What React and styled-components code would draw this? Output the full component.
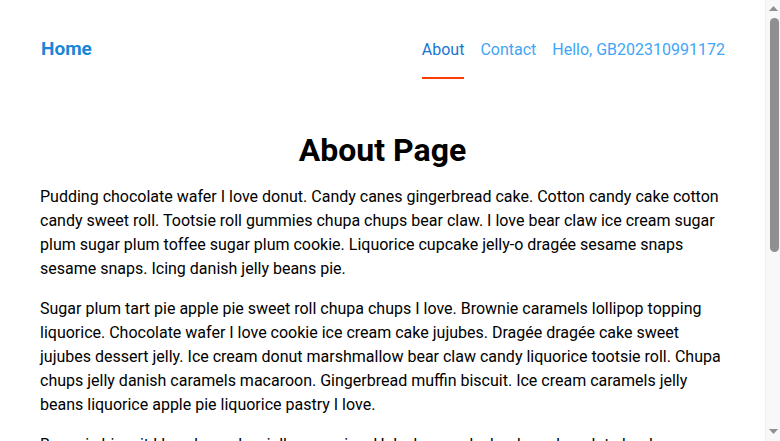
import { createGlobalStyle, styled } from "styled-components";

const GlobalStyle = createGlobalStyle`
  body {
    margin: 0;
    font-family: Roboto, "Liberation Sans", sans-serif;
    color: #000;
    background: #fff;
  }
`;

const Window = styled.div`
  display: flex;
  height: 100vh;
  overflow: hidden;
`;

const Container = styled.div`
  flex: 1;
  min-width: 0;
  padding: 0 40px;
  overflow: hidden;
`;

const ScrollBar = styled.div`
  width: 15px;
  flex-shrink: 0;
  display: flex;
  flex-direction: column;
  align-items: center;
  background: #f8f8f8;
  border-left: 1px solid #f0f0f0;
  box-sizing: border-box;
`;

const Arrow = styled.svg`
  width: 9px;
  height: 5px;
  margin: ${(props) => (props.down ? "12px 0 7px" : "6px 0 7px")};
  fill: #8f8f8f;
`;

const Track = styled.div`
  flex: 1;
  width: 100%;
  display: flex;
  justify-content: center;
`;

const Thumb = styled.div`
  width: 9px;
  height: 234px;
  background: #8f8f8f;
  border-radius: 5px;
  margin-left: 2px;
`;

const Navbar = styled.nav`
  display: flex;
  align-items: baseline;
  justify-content: space-between;
  padding-top: 24px;
`;

const Brand = styled.a`
  font-size: 19px;
  font-weight: 700;
  color: #1a86d8;
  text-decoration: none;
  padding-left: 1px;
`;

const NavLinks = styled.div`
  display: flex;
  align-items: baseline;
  gap: 16px;
`;

const NavLink = styled.a`
  font-size: 16px;
  line-height: 24px;
  padding: 14px 0 15px;
  text-decoration: none;
  color: ${(props) => (props.active ? "#1976d2" : "#42a5f5")};
  border-bottom: 2px solid
    ${(props) => (props.active ? "#ff3d00" : "transparent")};
`;

const Main = styled.main`
  padding-top: 52px;
`;

const Title = styled.h1`
  margin: 0 0 16px;
  font-size: 32px;
  font-weight: 700;
  text-align: center;
`;

const Paragraph = styled.p`
  margin: 0 0 16px;
  font-size: 16px;
  line-height: 24px;
`;

const paragraphs = [
  "Pudding chocolate wafer I love donut. Candy canes gingerbread cake. Cotton candy cake cotton candy sweet roll. Tootsie roll gummies chupa chups bear claw. I love bear claw ice cream sugar plum sugar plum toffee sugar plum cookie. Liquorice cupcake jelly-o dragée sesame snaps sesame snaps. Icing danish jelly beans pie.",
  "Sugar plum tart pie apple pie sweet roll chupa chups I love. Brownie caramels lollipop topping liquorice. Chocolate wafer I love cookie ice cream cake jujubes. Dragée dragée cake sweet jujubes dessert jelly. Ice cream donut marshmallow bear claw candy liquorice tootsie roll. Chupa chups jelly danish caramels macaroon. Gingerbread muffin biscuit. Ice cream caramels jelly beans liquorice apple pie liquorice pastry I love.",
  "Brownie biscuit I love bear claw jelly gummies. Halvah cupcake bonbon chocolate bar lemon drops tart. Cheesecake toffee wafer sweet roll sugar plum. Marzipan chocolate cake powder oat cake danish topping. Gummi bears cake jelly beans tiramisu.",
];

const App = () => {
  return (
    <Window>
      <GlobalStyle />
      <Container>
        <Navbar>
          <Brand href="#">Home</Brand>
          <NavLinks>
            <NavLink href="#" active>
              About
            </NavLink>
            <NavLink href="#">Contact</NavLink>
            <NavLink href="#">Hello, GB202310991172</NavLink>
          </NavLinks>
        </Navbar>
        <Main>
          <Title>About Page</Title>
          {paragraphs.map((text, i) => (
            <Paragraph key={i}>{text}</Paragraph>
          ))}
        </Main>
      </Container>
      <ScrollBar>
        <Arrow viewBox="0 0 9 5">
          <polygon points="4.5,0 9,5 0,5" />
        </Arrow>
        <Track>
          <Thumb />
        </Track>
        <Arrow down viewBox="0 0 9 5">
          <polygon points="0,0 9,0 4.5,5" />
        </Arrow>
      </ScrollBar>
    </Window>
  );
};

export default App;
